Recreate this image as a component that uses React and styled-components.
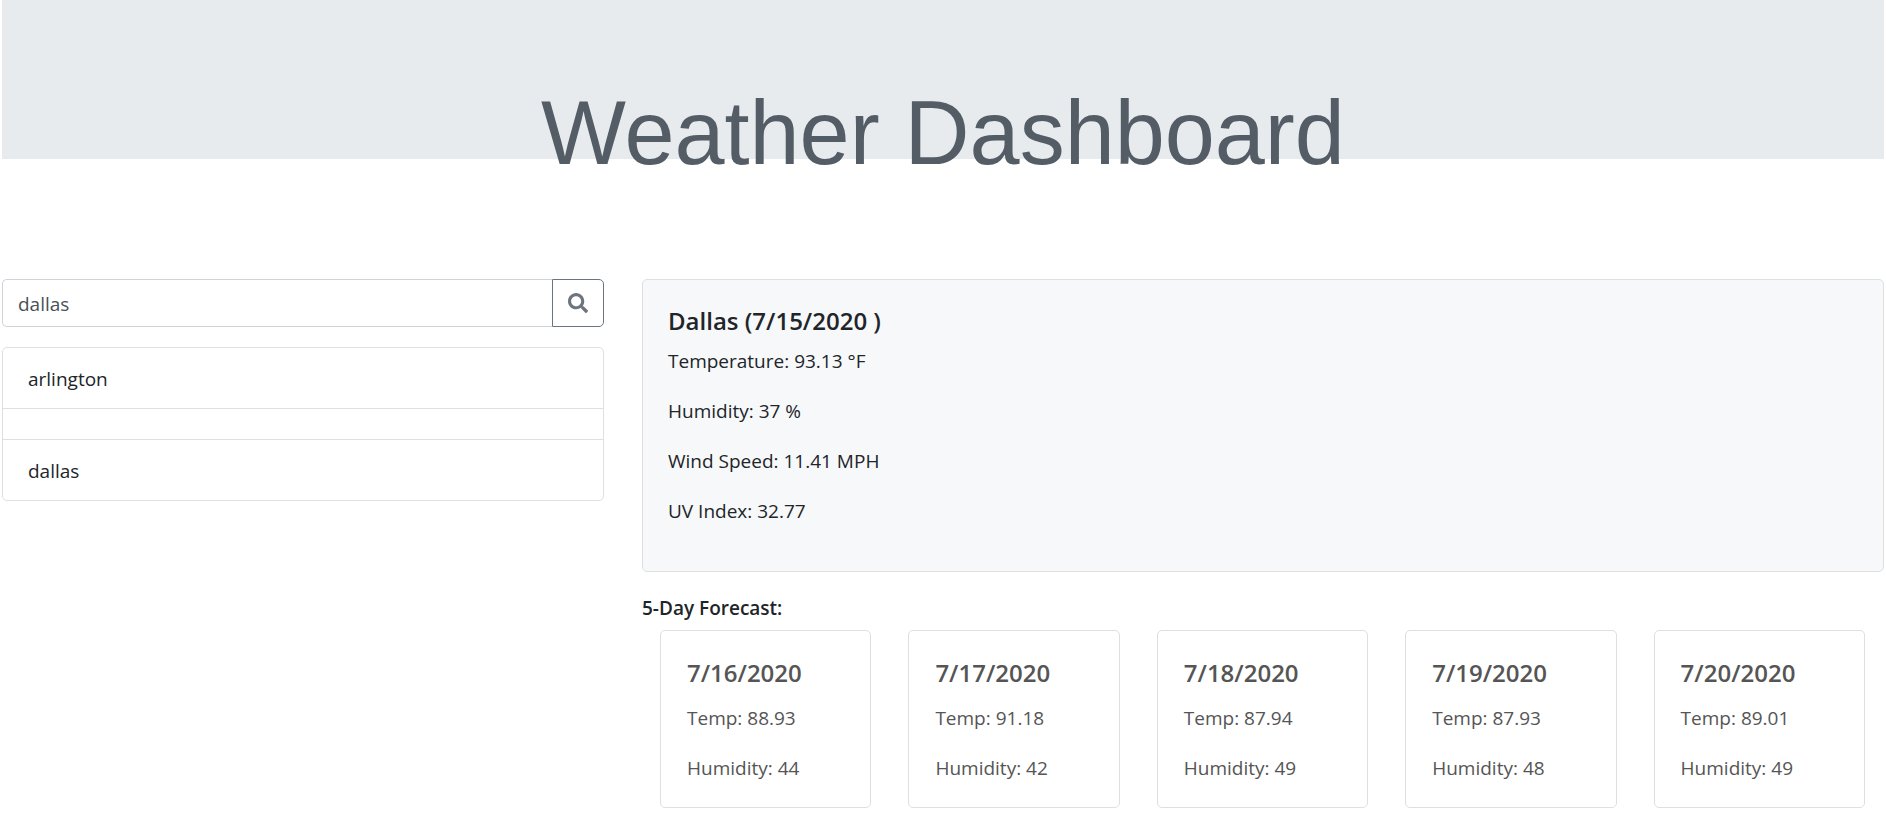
import React, { useState } from "react";
import styled, { createGlobalStyle } from "styled-components";
import { FaSearch } from "react-icons/fa";

const GlobalStyle = createGlobalStyle`
  *, *::before, *::after { box-sizing: border-box; }
  body {
    margin: 0;
    background: #fff;
    color: #212529;
    font-family: "Open Sans", "Noto Sans", sans-serif;
    font-size: 19px;
    line-height: 30px;
  }
`;

const Page = styled.div`
  padding: 0 2px;
`;

const Banner = styled.header`
  height: 159px;
  margin-bottom: 120px;
  padding-top: 79px;
  background: #e7ebee;
`;

const BannerTitle = styled.h1`
  margin: 0;
  color: #545d66;
  font-family: "Liberation Sans", Arial, sans-serif;
  font-size: 90px;
  font-weight: 400;
  line-height: 108px;
  text-align: center;
`;

const Columns = styled.div`
  display: flex;
  align-items: flex-start;
  gap: 38px;
`;

const Sidebar = styled.aside`
  flex: none;
  width: calc((100% + 38px) / 3 - 38px);
`;

const Main = styled.main`
  flex: 1;
  min-width: 0;
`;

const SearchForm = styled.form`
  display: flex;
  height: 48px;
  margin-bottom: 20px;
`;

const SearchInput = styled.input`
  flex: 1;
  min-width: 0;
  padding: 2px 15px 0;
  border: 1px solid #ced4da;
  border-right: 0;
  border-radius: 5px 0 0 5px;
  background: #fff;
  color: #495057;
  font: inherit;
`;

const SearchButton = styled.button`
  display: flex;
  align-items: center;
  justify-content: center;
  width: 52px;
  padding: 0;
  border: 1px solid #6c757d;
  border-radius: 0 5px 5px 0;
  background: #fff;
  color: #6c757d;
  font-size: 20px;
  cursor: pointer;
`;

const CityList = styled.ul`
  margin: 0;
  padding: 0;
  border: 1px solid #dfdfdf;
  border-radius: 5px;
  list-style: none;
`;

const CityItem = styled.li`
  padding: 16px 25px 14px;

  & + & {
    border-top: 1px solid #dfdfdf;
  }
`;

const Card = styled.article`
  padding: 26px 25px 25px;
  border: 1px solid #dfdfdf;
  border-radius: 5px;
  background: #f7f8fa;
`;

const DayCard = styled(Card)`
  padding: 27px 26px 24px;
  background: #fff;
  color: #555;
`;

const CardTitle = styled.h2`
  margin: 0 0 ${({ $gap }) => $gap}px;
  font-size: 24px;
  font-weight: 600;
  line-height: 30px;
`;

const Reading = styled.p`
  margin: 0 0 20px;

  ${DayCard} &:last-child {
    margin-bottom: 0;
  }
`;

const ForecastHeading = styled.h3`
  margin: 24px 0 10px;
  font-size: 19px;
  font-weight: 600;
  line-height: 24px;
`;

const ForecastGrid = styled.div`
  display: grid;
  grid-template-columns: repeat(5, minmax(0, 1fr));
  gap: 37px;
  padding: 0 19px 0 18px;
`;

const cities = ["arlington", "", "dallas"];

const readings = [
  "Temperature: 93.13 °F",
  "Humidity: 37 %",
  "Wind Speed: 11.41 MPH",
  "UV Index: 32.77",
];

const forecast = [
  { date: "7/16/2020", temp: "88.93", humidity: 44 },
  { date: "7/17/2020", temp: "91.18", humidity: 42 },
  { date: "7/18/2020", temp: "87.94", humidity: 49 },
  { date: "7/19/2020", temp: "87.93", humidity: 48 },
  { date: "7/20/2020", temp: "89.01", humidity: 49 },
];

export default function App() {
  const [query, setQuery] = useState("dallas");

  return (
    <>
      <GlobalStyle />
      <Page>
        <Banner>
          <BannerTitle>Weather Dashboard</BannerTitle>
        </Banner>
        <Columns>
          <Sidebar>
            <SearchForm onSubmit={(event) => event.preventDefault()}>
              <SearchInput
                type="text"
                aria-label="City"
                value={query}
                onChange={(event) => setQuery(event.target.value)}
              />
              <SearchButton type="submit" aria-label="Search">
                <FaSearch />
              </SearchButton>
            </SearchForm>
            <CityList>
              {cities.map((city, index) => (
                <CityItem key={index}>{city}</CityItem>
              ))}
            </CityList>
          </Sidebar>
          <Main>
            <Card>
              <CardTitle $gap={10}>Dallas (7/15/2020 )</CardTitle>
              {readings.map((reading) => (
                <Reading key={reading}>{reading}</Reading>
              ))}
            </Card>
            <ForecastHeading>5-Day Forecast:</ForecastHeading>
            <ForecastGrid>
              {forecast.map((day) => (
                <DayCard key={day.date}>
                  <CardTitle $gap={15}>{day.date}</CardTitle>
                  <Reading>Temp: {day.temp}</Reading>
                  <Reading>Humidity: {day.humidity}</Reading>
                </DayCard>
              ))}
            </ForecastGrid>
          </Main>
        </Columns>
      </Page>
    </>
  );
}
